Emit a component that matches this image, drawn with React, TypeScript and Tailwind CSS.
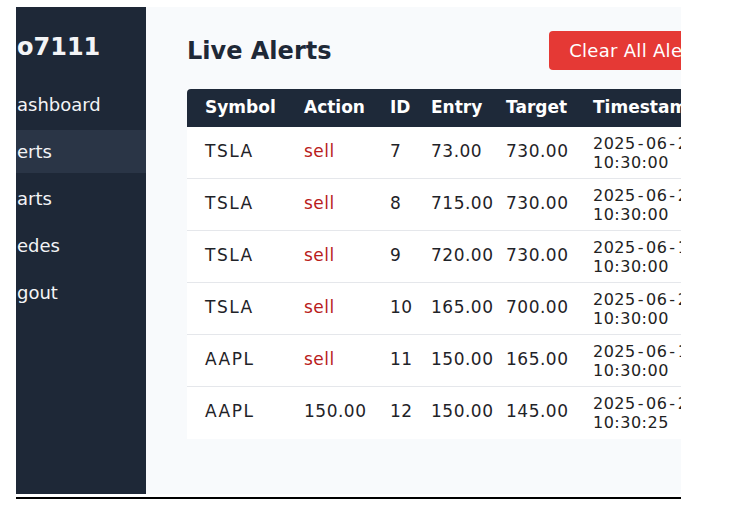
import React from "react";

type Row = {
  symbol: string;
  action: string;
  sell: boolean;
  id: string;
  entry: string;
  target: string;
  date: string[];
  time: string;
};

const rows: Row[] = [
  { symbol: "TSLA", action: "sell", sell: true, id: "7", entry: "73.00", target: "730.00", date: ["2025", "06", "20"], time: "10:30:00" },
  { symbol: "TSLA", action: "sell", sell: true, id: "8", entry: "715.00", target: "730.00", date: ["2025", "06", "20"], time: "10:30:00" },
  { symbol: "TSLA", action: "sell", sell: true, id: "9", entry: "720.00", target: "730.00", date: ["2025", "06", "19"], time: "10:30:00" },
  { symbol: "TSLA", action: "sell", sell: true, id: "10", entry: "165.00", target: "700.00", date: ["2025", "06", "20"], time: "10:30:00" },
  { symbol: "AAPL", action: "sell", sell: true, id: "11", entry: "150.00", target: "165.00", date: ["2025", "06", "19"], time: "10:30:00" },
  { symbol: "AAPL", action: "150.00", sell: false, id: "12", entry: "150.00", target: "145.00", date: ["2025", "06", "20"], time: "10:30:25" },
];

const nav = [
  { label: "ashboard", active: false },
  { label: "erts", active: true },
  { label: "arts", active: false },
  { label: "edes", active: false },
  { label: "gout", active: false },
];

export default function App() {
  return (
    <div className="min-h-screen bg-white pl-[16px] pt-[7px] font-['DejaVu_Sans',sans-serif]">
      <div className="flex h-[487px] w-[665px] overflow-hidden">
        <aside className="w-[130px] shrink-0 bg-[#1e2837] pt-[28px] text-[#f3f4f6]">
          <div className="h-[24px] whitespace-nowrap pl-px text-[24px] font-bold leading-[24px]">o7111</div>
          <nav className="mt-[24px] flex flex-col gap-[4px]">
            {nav.map((n) => (
              <div
                key={n.label}
                className={
                  n.active
                    ? "flex h-[43px] items-center whitespace-nowrap bg-[#2a3546] pl-px text-[18px]"
                    : "flex h-[43px] items-center whitespace-nowrap pl-px text-[18px]"
                }
              >
                {n.label}
              </div>
            ))}
          </nav>
        </aside>
        <main className="min-w-0 flex-1 overflow-hidden bg-[#f8fafc] pl-[41px] pt-[24px]">
          <div className="flex h-[39px] w-[540px] items-center justify-between">
            <h1 className="whitespace-nowrap text-[24px] font-bold leading-none text-[#1f2937]">Live Alerts</h1>
            <button className="h-[39px] whitespace-nowrap rounded-[4px] bg-[#e53935] px-[20px] text-[18px] tracking-[0.3px] text-white">
              Clear All Alerts
            </button>
          </div>
          <div className="mt-[19px] w-[528px] bg-white">
            <div className="grid h-[38px] grid-cols-[99px_86px_41px_75px_87px_140px] items-center rounded-t-[4px] bg-[#1e2939] text-[17px] font-bold text-white">
              <div className="whitespace-nowrap pl-[18px]">Symbol</div>
              <div className="whitespace-nowrap pl-[18px]">Action</div>
              <div className="whitespace-nowrap pl-[18px]">ID</div>
              <div className="whitespace-nowrap pl-[18px]">Entry</div>
              <div className="whitespace-nowrap pl-[18px]">Target</div>
              <div className="whitespace-nowrap pl-[18px]">Timestamp</div>
            </div>
            {rows.map((r, i) => (
              <div
                key={r.id}
                className={
                  i === rows.length - 1
                    ? "grid h-[52px] grid-cols-[99px_86px_41px_75px_87px_140px] items-center text-[17px] tracking-[0.5px] text-[#1f2328]"
                    : "grid h-[52px] grid-cols-[99px_86px_41px_75px_87px_140px] items-center border-b border-[#e5e7eb] text-[17px] tracking-[0.5px] text-[#1f2328]"
                }
              >
                <div className="whitespace-nowrap pb-[2px] pl-[18px] tracking-[1.5px]">{r.symbol}</div>
                <div className={r.sell ? "whitespace-nowrap pb-[2px] pl-[18px] text-[#b91c1c]" : "whitespace-nowrap pb-[2px] pl-[18px]"}>
                  {r.action}
                </div>
                <div className="whitespace-nowrap pb-[2px] pl-[18px]">{r.id}</div>
                <div className="whitespace-nowrap pb-[2px] pl-[18px]">{r.entry}</div>
                <div className="whitespace-nowrap pb-[2px] pl-[18px]">{r.target}</div>
                <div className="pl-[18px] text-[16px] leading-[19px] text-[#222]">
                  <div className="whitespace-nowrap">
                    {r.date[0]}
                    <span className="px-[2px]">-</span>
                    {r.date[1]}
                    <span className="px-[2px]">-</span>
                    {r.date[2]}
                  </div>
                  <div className="whitespace-nowrap">{r.time}</div>
                </div>
              </div>
            ))}
          </div>
        </main>
      </div>
      <div className="mt-[3px] h-[2px] w-[665px] bg-black" />
    </div>
  );
}
